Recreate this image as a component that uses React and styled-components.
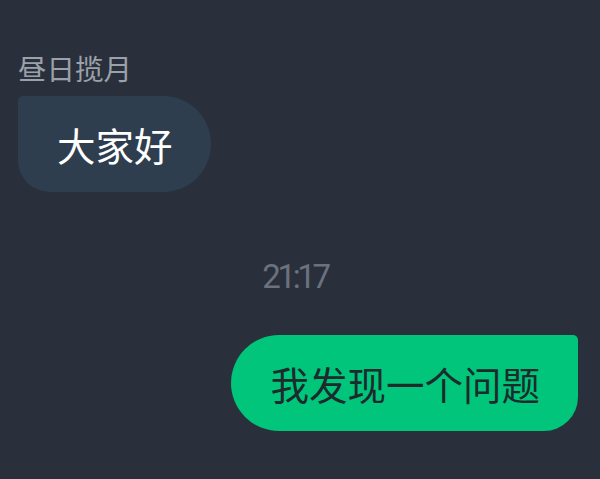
import React from 'react'
import styled, { createGlobalStyle } from 'styled-components'

const GlobalStyle = createGlobalStyle`
  html, body {
    margin: 0;
    padding: 0;
    background: #29303b;
  }
  body {
    font-family: "Noto Sans CJK SC", "Noto Sans", sans-serif;
  }
`

const Chat = styled.div`
  width: 600px;
  height: 479px;
  box-sizing: border-box;
  padding: 48px 22px 0 18px;
  display: flex;
  flex-direction: column;
  overflow: hidden;
`

const Sender = styled.div`
  font-size: 28.5px;
  line-height: 40px;
  color: #9ba1aa;
`

const Bubble = styled.div`
  height: 96px;
  box-sizing: border-box;
  display: flex;
  align-items: center;
  padding: 0 38px 0 39px;
  font-size: 38.5px;
  align-self: ${p => (p.mine ? 'flex-end' : 'flex-start')};
  background: ${p => (p.mine ? '#00c57b' : '#2f3e4f')};
  color: ${p => (p.mine ? '#1d2b2c' : '#ffffff')};
  border-radius: ${p => (p.mine ? '48px 5px 34px 48px' : '5px 48px 48px 32px')};
  margin-top: ${p => p.gap || 0}px;
`

const Time = styled.div`
  align-self: center;
  margin: 65px 0 0 -6px;
  font-family: Roboto, "Noto Sans", sans-serif;
  font-size: 33px;
  letter-spacing: -3.3px;
  line-height: 40px;
  color: #6b727d;
`

export default function App() {
  return (
    <>
      <GlobalStyle />
      <Chat>
        <Sender>昼日揽月</Sender>
        <Bubble gap={8}>大家好</Bubble>
        <Time>21:17</Time>
        <Bubble mine gap={38}>我发现一个问题</Bubble>
      </Chat>
    </>
  )
}
